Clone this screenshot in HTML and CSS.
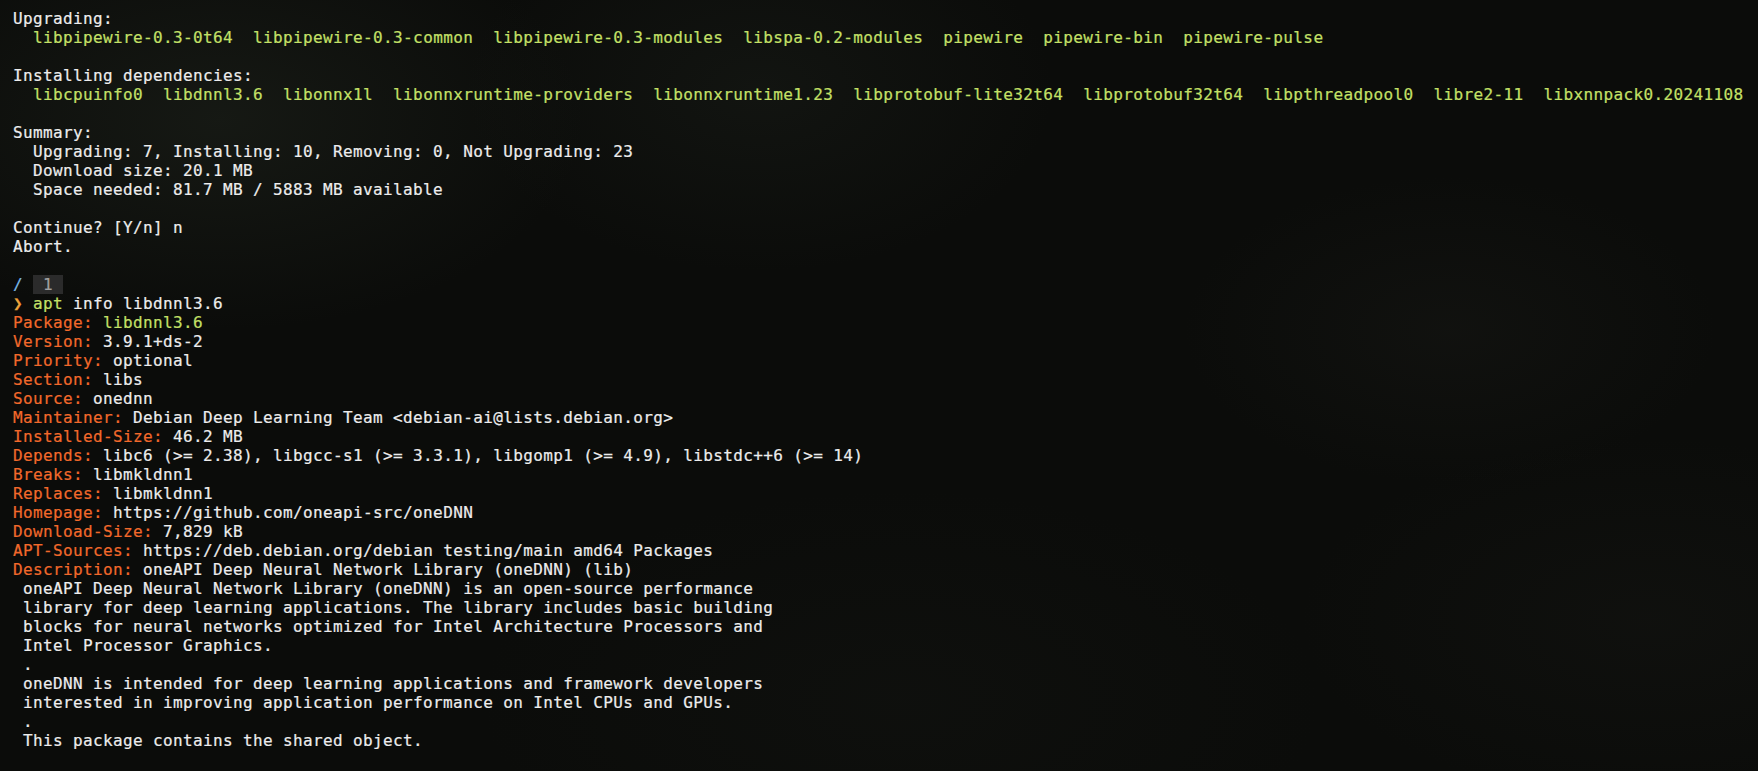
FILE: index.html
```html
<!DOCTYPE html>
<html lang="en">
<head>
    <meta charset="UTF-8">
    <meta name="viewport" content="width=device-width, initial-scale=1.0">
    <title>Terminal</title>
    <link rel="stylesheet" href="styles.css">
</head>
<body>
    <div class="terminal">
<pre class="output">Upgrading:
  <span class="pkg">libpipewire-0.3-0t64  libpipewire-0.3-common  libpipewire-0.3-modules  libspa-0.2-modules  pipewire  pipewire-bin  pipewire-pulse</span>

Installing dependencies:
  <span class="pkg">libcpuinfo0  libdnnl3.6  libonnx1l  libonnxruntime-providers  libonnxruntime1.23  libprotobuf-lite32t64  libprotobuf32t64  libpthreadpool0  libre2-11  libxnnpack0.20241108</span>

Summary:
  Upgrading: 7, Installing: 10, Removing: 0, Not Upgrading: 23
  Download size: 20.1 MB
  Space needed: 81.7 MB / 5883 MB available

Continue? [Y/n] n
Abort.

<span class="cwd">/</span> <span class="badge"> 1 </span>
<span class="prompt">❯</span> <span class="cmd">apt</span> info libdnnl3.6
<span class="key">Package:</span> <span class="pkg">libdnnl3.6</span>
<span class="key">Version:</span> 3.9.1+ds-2
<span class="key">Priority:</span> optional
<span class="key">Section:</span> libs
<span class="key">Source:</span> onednn
<span class="key">Maintainer:</span> Debian Deep Learning Team &lt;debian-ai@lists.debian.org&gt;
<span class="key">Installed-Size:</span> 46.2 MB
<span class="key">Depends:</span> libc6 (&gt;= 2.38), libgcc-s1 (&gt;= 3.3.1), libgomp1 (&gt;= 4.9), libstdc++6 (&gt;= 14)
<span class="key">Breaks:</span> libmkldnn1
<span class="key">Replaces:</span> libmkldnn1
<span class="key">Homepage:</span> https://github.com/oneapi-src/oneDNN
<span class="key">Download-Size:</span> 7,829 kB
<span class="key">APT-Sources:</span> https://deb.debian.org/debian testing/main amd64 Packages
<span class="key">Description:</span> oneAPI Deep Neural Network Library (oneDNN) (lib)
 oneAPI Deep Neural Network Library (oneDNN) is an open-source performance
 library for deep learning applications. The library includes basic building
 blocks for neural networks optimized for Intel Architecture Processors and
 Intel Processor Graphics.
 .
 oneDNN is intended for deep learning applications and framework developers
 interested in improving application performance on Intel CPUs and GPUs.
 .
 This package contains the shared object.</pre>
    </div>
</body>
</html>
```

FILE: styles.css
```css
html, body {
    margin: 0;
    height: 100%;
}

body {
    background-color: #0b0c0a;
    /* faint foliage texture of the wallpaper behind the terminal */
    background-image:
        radial-gradient(ellipse 520px 300px at 220px 120px, rgba(60, 70, 55, 0.22), transparent 70%),
        radial-gradient(ellipse 420px 260px at 760px 90px, rgba(50, 58, 48, 0.18), transparent 70%),
        radial-gradient(ellipse 380px 220px at 1450px 330px, rgba(40, 40, 36, 0.2), transparent 70%),
        radial-gradient(ellipse 500px 260px at 1650px 620px, rgba(36, 36, 32, 0.18), transparent 70%),
        radial-gradient(ellipse 600px 300px at 900px 700px, rgba(28, 30, 26, 0.2), transparent 70%);
    overflow: hidden;
}

.terminal {
    padding: 9px 12px 0 13px;
}

.output {
    margin: 0;
    font-family: "DejaVu Sans Mono", "Liberation Mono", monospace;
    font-size: 16px;
    letter-spacing: 0.37px;
    line-height: 19px;
    color: #ededed;
    white-space: pre;
    -webkit-text-stroke: 0.2px currentColor;
}

.pkg {
    color: #c4e067;
}

.key {
    color: #f2692b;
}

.cwd {
    color: #7ab8e4;
}

/* the jobs counter in the prompt, drawn as a grey block */
.badge {
    display: inline-block;
    height: 19px;
    vertical-align: top;
    background-color: #2b2b2b;
    color: #a0a0a0;
}

.prompt {
    color: #eea23a;
}

.cmd {
    color: #c4e067;
}
```
